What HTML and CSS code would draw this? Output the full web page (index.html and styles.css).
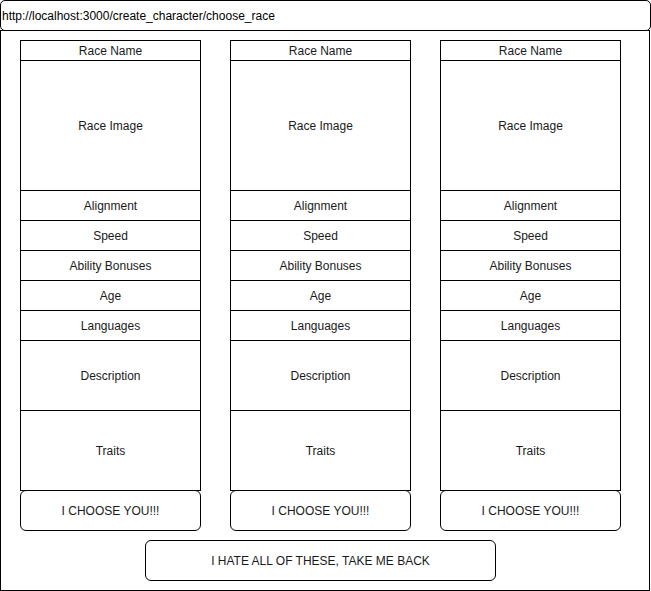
FILE: index.html
```html
<!DOCTYPE html>
<html lang="en">
<head>
  <meta charset="UTF-8" />
  <title>Choose Race</title>
  <link rel="stylesheet" href="styles.css">
</head>
<body>
  <div class="address-bar">http://localhost:3000/create_character/choose_race</div>
  <div class="frame">
    <div class="races">
      <div class="race">
        <div class="cell name">Race Name</div>
        <div class="cell image">Race Image</div>
        <div class="cell">Alignment</div>
        <div class="cell">Speed</div>
        <div class="cell">Ability Bonuses</div>
        <div class="cell">Age</div>
        <div class="cell">Languages</div>
        <div class="cell description">Description</div>
        <div class="cell traits">Traits</div>
        <div class="cell choose">I CHOOSE YOU!!!</div>
      </div>
      <div class="race">
        <div class="cell name">Race Name</div>
        <div class="cell image">Race Image</div>
        <div class="cell">Alignment</div>
        <div class="cell">Speed</div>
        <div class="cell">Ability Bonuses</div>
        <div class="cell">Age</div>
        <div class="cell">Languages</div>
        <div class="cell description">Description</div>
        <div class="cell traits">Traits</div>
        <div class="cell choose">I CHOOSE YOU!!!</div>
      </div>
      <div class="race">
        <div class="cell name">Race Name</div>
        <div class="cell image">Race Image</div>
        <div class="cell">Alignment</div>
        <div class="cell">Speed</div>
        <div class="cell">Ability Bonuses</div>
        <div class="cell">Age</div>
        <div class="cell">Languages</div>
        <div class="cell description">Description</div>
        <div class="cell traits">Traits</div>
        <div class="cell choose">I CHOOSE YOU!!!</div>
      </div>
    </div>
    <div class="back">I HATE ALL OF THESE, TAKE ME BACK</div>
  </div>
</body>
</html>
```

FILE: styles.css
```css
body {
  margin: 0;
  font-family: "Liberation Sans", Arial, sans-serif;
  font-size: 12px;
  color: #000;
  background: white;
}
.address-bar {
  box-sizing: border-box;
  width: 651px;
  height: 31px;
  border: 1px solid #000;
  border-radius: 5px;
  padding-left: 1px;
  display: flex;
  align-items: center;
  position: relative;
  z-index: 1;
  background: white;
}
.frame {
  box-sizing: border-box;
  width: 650px;
  height: 561px;
  margin-top: -1px;
  border: 1px solid #000;
  padding: 10px 0 0 19px;
}
.races {
  display: flex;
  gap: 29px;
}
.race {
  display: flex;
  flex-direction: column;
  width: 181px;
}
.cell {
  box-sizing: border-box;
  height: 31px;
  border: 1px solid #000;
  margin-top: -1px;
  display: flex;
  align-items: center;
  justify-content: center;
  color: #1a1a1a;
  background: white;
}
.cell.name {
  height: 21px;
}
.cell.image {
  height: 131px;
}
.cell.description {
  height: 71px;
}
.cell.traits {
  height: 81px;
}
.cell.choose {
  height: 41px;
  border-radius: 6px;
}
.back {
  box-sizing: border-box;
  width: 351px;
  height: 41px;
  margin: 9px 0 0 125px;
  border: 1px solid #000;
  border-radius: 6px;
  display: flex;
  align-items: center;
  justify-content: center;
  color: #1a1a1a;
}
```
